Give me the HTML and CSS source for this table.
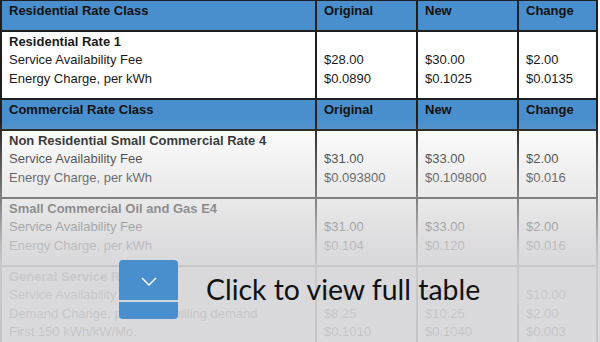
FILE: index.html
```html
<!DOCTYPE html>
<html>
<head>
<meta charset="utf-8">
<link rel="stylesheet" href="styles.css">
</head>
<body>
<div class="frame">
  <table class="rates">
    <colgroup>
      <col class="c-name"><col class="c-orig"><col class="c-new"><col class="c-chg">
    </colgroup>
    <tr class="head">
      <th>Residential Rate Class</th><th>Original</th><th>New</th><th>Change</th>
    </tr>
    <tr class="body">
      <td><b>Residential Rate 1</b><br>Service Availability Fee<br>Energy Charge, per kWh</td>
      <td><br>$28.00<br>$0.0890</td>
      <td><br>$30.00<br>$0.1025</td>
      <td><br>$2.00<br>$0.0135</td>
    </tr>
    <tr class="head">
      <th>Commercial Rate Class</th><th>Original</th><th>New</th><th>Change</th>
    </tr>
    <tr class="body">
      <td><b>Non Residential Small Commercial Rate 4</b><br>Service Availability Fee<br>Energy Charge, per kWh</td>
      <td><br>$31.00<br>$0.093800</td>
      <td><br>$33.00<br>$0.109800</td>
      <td><br>$2.00<br>$0.016</td>
    </tr>
    <tr class="body">
      <td><b>Small Commercial Oil and Gas E4</b><br>Service Availability Fee<br>Energy Charge, per kWh</td>
      <td><br>$31.00<br>$0.104</td>
      <td><br>$33.00<br>$0.120</td>
      <td><br>$2.00<br>$0.016</td>
    </tr>
    <tr class="body">
      <td><b>General Service Rate 5</b><br>Service Availability Fee<br>Demand Change, per kW of billing demand<br>First 150 kWh/kW/Mo.</td>
      <td><br>$20.00<br>$8.25<br>$0.1010</td>
      <td><br>$30.00<br>$10.25<br>$0.1040</td>
      <td><br>$10.00<br>$2.00<br>$0.003</td>
    </tr>
  </table>
  <div class="fade"></div>
  <div class="cta">
    <div class="cta-btn">
      <svg class="chev" width="16" height="9" viewBox="0 0 16 9"><path d="M1 1 L8 8 L15 1" fill="none" stroke="#ffffff" stroke-width="1.4"/></svg>
      <div class="cta-line"></div>
    </div>
    <span class="cta-text">Click to view full table</span>
  </div>
</div>
</body>
</html>
```

FILE: styles.css
```css
html, body {
  margin: 0;
  padding: 0;
  background: #ffffff;
}
.frame {
  position: relative;
  width: 600px;
  height: 342px;
  overflow: hidden;
  font-family: "Liberation Sans", Arial, sans-serif;
}
.rates {
  border-collapse: separate;
  border-spacing: 0;
  table-layout: fixed;
  width: 598px;
  font-size: 13px;
  line-height: 18.4px;
  color: #1a1a1a;
}
.c-name { width: 317px; }
.c-orig { width: 101px; }
.c-new { width: 101px; }
.c-chg { width: 79px; }
.rates th, .rates td {
  border-right: 2px solid #1f1f1f;
  border-bottom: 2px solid #1f1f1f;
  padding: 0 0 0 7px;
  text-align: left;
  vertical-align: top;
  white-space: nowrap;
  overflow: hidden;
}
.rates th:first-child, .rates td:first-child {
  border-left: 2px solid #1f1f1f;
}
.head th {
  background: #4a8fcd;
  color: #111111;
  font-weight: bold;
  padding-top: 1px;
  box-sizing: border-box;
  height: 31px;
}
.rates tr:first-child th {
  border-top: 1px solid #1f1f1f;
  height: 32px;
  padding-top: 1px;
}
.body td {
  height: 68px;
  box-sizing: border-box;
  padding-top: 1px;
}
.fade {
  position: absolute;
  left: 0;
  top: 0;
  width: 600px;
  height: 342px;
  pointer-events: none;
  background: linear-gradient(to bottom,
    rgba(214,214,216,0) 0px,
    rgba(214,214,216,0) 120px,
    rgba(214,214,216,0.32) 162px,
    rgba(214,214,216,0.55) 202px,
    rgba(214,214,216,0.84) 242px,
    rgba(214,214,216,0.93) 268px,
    rgba(214,214,216,0.90) 342px);
}
.cta {
  position: absolute;
  left: 119px;
  top: 260px;
  display: flex;
  align-items: flex-start;
  gap: 28px;
}
.cta-btn {
  width: 59px;
  height: 59px;
  background: #4a8fcd;
  border-radius: 4px;
  display: flex;
  flex-direction: column;
  align-items: center;
}
.chev {
  margin-top: 17px;
  display: block;
}
.cta-line {
  margin-top: 14px;
  width: 59px;
  height: 2px;
  background: #d3d8de;
}
.cta-text {
  font-family: Lato, "Open Sans", sans-serif;
  font-size: 28.4px;
  line-height: 29px;
  margin-top: 15px;
  color: #111111;
}
```
